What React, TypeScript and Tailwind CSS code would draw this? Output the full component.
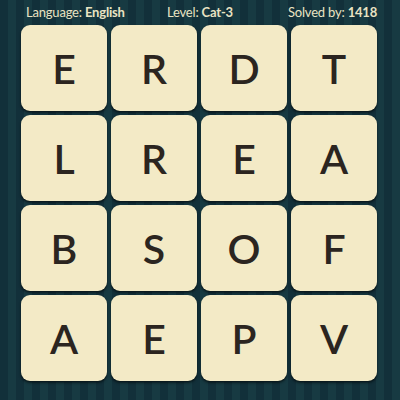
const rows = [
  ['E', 'R', 'D', 'T'],
  ['L', 'R', 'E', 'A'],
  ['B', 'S', 'O', 'F'],
  ['A', 'E', 'P', 'V'],
]

function Tile({ letter }: { letter: string }) {
  return (
    <div className="flex h-[86px] w-[86px] items-center justify-center rounded-[9px] bg-[#f3eac6] shadow-[0_1px_1px_#0a1a1e,0_2px_3px_rgba(0,0,0,0.45)]">
      <span className="text-[41px] font-semibold leading-none text-[#2b2520]">{letter}</span>
    </div>
  )
}

export default function App() {
  return (
    <div
      className="h-[400px] w-[400px] overflow-hidden bg-[#143339] bg-[repeating-linear-gradient(90deg,#12303a_0px,#12303a_8px,#173a42_8px,#173a42_16px)]"
      style={{ fontFamily: 'Lato, "Noto Sans", sans-serif' }}
    >
      <div className="flex h-[25px] items-center pl-[26px] text-[13px] leading-none tracking-[-0.2px] text-[#e9e3c3]">
        <span className="w-[141px]">
          Language: <span className="font-bold">English</span>
        </span>
        <span className="w-[121px]">
          Level: <span className="font-bold">Cat-3</span>
        </span>
        <span>
          Solved by: <span className="font-bold">1418</span>
        </span>
      </div>
      <div className="grid grid-cols-[repeat(4,86px)] gap-[4px] pl-[21px]">
        {rows.flat().map((l, i) => (
          <Tile key={i} letter={l} />
        ))}
      </div>
    </div>
  )
}
